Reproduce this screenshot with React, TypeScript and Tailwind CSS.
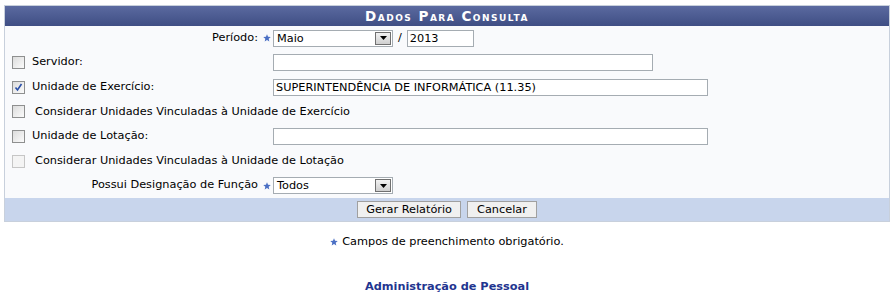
import React from 'react';

const Star = () => (
  <svg width="8" height="8" viewBox="0 0 10 10" className="inline-block">
    <path d="M5 0.3 L6.3 3.4 L9.7 3.7 L7.1 5.9 L7.9 9.3 L5 7.5 L2.1 9.3 L2.9 5.9 L0.3 3.7 L3.7 3.4 Z" fill="#4a6fc4" />
  </svg>
);

const Checkbox: React.FC<{ checked?: boolean; disabled?: boolean }> = ({ checked, disabled }) => (
  <span
    className={`inline-flex items-center justify-center w-[13px] h-[13px] border ${disabled ? 'border-[#c6c6c6] bg-[#f4f4f4]' : 'border-[#8e8f8f] bg-gradient-to-br from-[#dcdcdc] to-[#fbfbfb]'}`}
  >
    {checked && (
      <svg width="9" height="9" viewBox="0 0 9 9">
        <path d="M1.5 4.5 L3.5 7 L7.5 1" stroke="#2a4fa8" strokeWidth="1.6" fill="none" />
      </svg>
    )}
  </span>
);

const Select: React.FC<{ value: string }> = ({ value }) => (
  <div className="flex items-center w-[120px] h-[17px] border border-[#a5acb2] bg-white">
    <span className="flex-1 pl-[3px] leading-none">{value}</span>
    <span className="flex items-center justify-center w-[16px] h-[13px] mr-[1px] border border-[#707070] bg-gradient-to-b from-[#f2f2f2] to-[#cfcfcf]">
      <svg width="7" height="4" viewBox="0 0 7 4">
        <path d="M0 0 H7 L3.5 4 Z" fill="#000" />
      </svg>
    </span>
  </div>
);

const TextInput: React.FC<{ width: string; value?: string }> = ({ width, value }) => (
  <div className={`${width} h-[17px] border border-[#a5acb2] bg-white flex items-center pl-[2px] leading-none`}>
    {value}
  </div>
);

const Row: React.FC<{ left: React.ReactNode; right?: React.ReactNode; align?: 'left' | 'right' }> = ({ left, right, align = 'left' }) => (
  <div className="grid grid-cols-[268px_1fr] h-[24.57px] items-center">
    <div className={`flex items-center ${align === 'right' ? 'justify-end pr-[2px]' : 'pl-[7px]'}`}>{left}</div>
    <div className="flex items-center">{right}</div>
  </div>
);

export default function App() {
  return (
    <div className="w-[894px] h-[293px] bg-white text-[11.3px] text-black" style={{ fontFamily: '"DejaVu Sans", Verdana, sans-serif' }}>
      <div className="pt-[5px] px-[4px]">
        <div className="w-[886px] border border-[#c8d0dc]">
          <div className="h-[20px] bg-gradient-to-b from-[#5b6aa0] to-[#3f4e84] flex items-center justify-center text-white font-bold text-[13.5px] tracking-[1.5px] [font-variant:small-caps]">
            Dados Para Consulta
          </div>
          <div className="bg-[#f9fafc]">
            <Row
              align="right"
              left={
                <span className="flex items-center gap-[5px]">
                  <span>Período:</span>
                  <Star />
                </span>
              }
              right={
                <span className="flex items-center">
                  <Select value="Maio" />
                  <span className="mx-[5px]">/</span>
                  <TextInput width="w-[67px]" value="2013" />
                </span>
              }
            />
            <Row
              left={
                <span className="flex items-center gap-[7px]">
                  <Checkbox />
                  <span>Servidor:</span>
                </span>
              }
              right={<TextInput width="w-[380px]" />}
            />
            <Row
              left={
                <span className="flex items-center gap-[7px]">
                  <Checkbox checked />
                  <span>Unidade de Exercício:</span>
                </span>
              }
              right={<TextInput width="w-[435px]" value="SUPERINTENDÊNCIA DE INFORMÁTICA (11.35)" />}
            />
            <Row
              left={
                <span className="flex items-center gap-[10px] whitespace-nowrap">
                  <Checkbox />
                  <span>Considerar Unidades Vinculadas à Unidade de Exercício</span>
                </span>
              }
            />
            <Row
              left={
                <span className="flex items-center gap-[7px]">
                  <Checkbox />
                  <span>Unidade de Lotação:</span>
                </span>
              }
              right={<TextInput width="w-[435px]" />}
            />
            <Row
              left={
                <span className="flex items-center gap-[10px] whitespace-nowrap">
                  <Checkbox disabled />
                  <span>Considerar Unidades Vinculadas à Unidade de Lotação</span>
                </span>
              }
            />
            <Row
              align="right"
              left={
                <span className="flex items-center gap-[5px]">
                  <span>Possui Designação de Função</span>
                  <Star />
                </span>
              }
              right={<Select value="Todos" />}
            />
          </div>
          <div className="h-[23px] bg-[#c8d5ec] flex items-center justify-center gap-[6px]">
            <button className="h-[17px] px-[8px] border border-[#a0a0a0] bg-[#f0f0f0] leading-none">Gerar Relatório</button>
            <button className="h-[17px] px-[9px] border border-[#a0a0a0] bg-[#f0f0f0] leading-none">Cancelar</button>
          </div>
        </div>
      </div>
      <div className="mt-[12px] flex items-center justify-center gap-[4px]">
        <Star />
        <span>Campos de preenchimento obrigatório.</span>
      </div>
      <div className="mt-[28px] text-center font-bold text-[#1f3590]">Administração de Pessoal</div>
    </div>
  );
}
